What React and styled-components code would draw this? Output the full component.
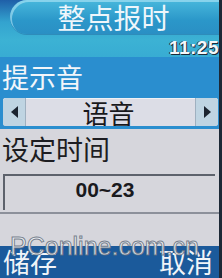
import React from "react";
import styled, { createGlobalStyle } from "styled-components";

const Global = createGlobalStyle`
  html, body { margin: 0; padding: 0; background: #d6d6dc; }
  body { width: 222px; height: 278px; overflow: hidden; }
`;

const cjk = `"Noto Sans CJK SC", "Noto Sans", sans-serif`;

const Screen = styled.div`
  position: relative;
  width: 222px;
  height: 278px;
  display: flex;
  flex-direction: column;
  overflow: hidden;
  background: #d6d6dc;
  font-family: ${cjk};
  border-right: 3px solid #1c2836;
  box-sizing: border-box;
`;

const Top = styled.div`
  background: linear-gradient(to bottom, #1f5fa8 0px, #33a3cf 22px, #3cb2d4 40px, #38acd3 57px);
  display: flex;
  flex-direction: column;
  height: 57px;
`;

const Pill = styled.div`
  margin-left: 10px;
  height: 34px;
  border-radius: 17px 0 0 17px;
  background: linear-gradient(to bottom, #48b8dc, #2b97c9 60%, #2a8fc4);
  box-shadow: inset 2px 2px 0 rgba(190, 235, 250, 0.55), 0 1px 0 rgba(30, 90, 150, 0.4);
  display: flex;
  align-items: center;
  justify-content: center;
  padding-right: 2px;
`;

const Title = styled.span`
  color: #eef6fb;
  font-size: 28px;
  line-height: 34px;
`;

const TimeRow = styled.div`
  display: flex;
  justify-content: flex-end;
  padding-top: 5px;
`;

const Time = styled.span`
  font-family: "Liberation Sans", Arial, sans-serif;
  font-weight: bold;
  font-size: 19px;
  line-height: 17px;
  color: #f4f8fa;
  text-shadow: 1px 1px 0 #1a2a3a, -1px 0 0 #2a3a4a;
  letter-spacing: 0.5px;
`;

const Highlight = styled.div`
  background: #2a8ecf;
  display: flex;
  flex-direction: column;
  padding: 3px 1px 3px 3px;
  height: 72px;
  box-sizing: border-box;
`;

const Label = styled.div`
  font-size: 27px;
  line-height: 33px;
  color: ${(p) => (p.$light ? "#f2f6fa" : "#1d1d22")};
  margin-left: -1px;
`;

const Selector = styled.div`
  margin-top: 5px;
  height: 29px;
  display: flex;
  border-radius: 3px;
  overflow: hidden;
  background: #dcdde6;
  box-shadow: inset 0 1px 0 #eef0f4;
`;

const ArrowCell = styled.div`
  width: 22px;
  background: #bfd4e2;
  display: flex;
  align-items: center;
  justify-content: center;
  border-${(p) => (p.$side === "left" ? "right" : "left")}: 1px solid #9fb0c0;
`;

const Arrow = styled.div`
  width: 0;
  height: 0;
  border-top: 6px solid transparent;
  border-bottom: 6px solid transparent;
  ${(p) =>
    p.$side === "left"
      ? "border-right: 7px solid #1c2430;"
      : "border-left: 7px solid #1c2430;"}
`;

const SelectorValue = styled.div`
  flex: 1;
  display: flex;
  align-items: center;
  justify-content: center;
  font-size: 26px;
  line-height: 29px;
  color: #18181c;
  padding-right: 4px;
`;

const Body = styled.div`
  flex: 1;
  display: flex;
  flex-direction: column;
  padding: 3px 0 0 3px;
`;

const InputBox = styled.div`
  margin-top: 9px;
  margin-right: 4px;
  height: 28px;
  border-top: 2px solid #5d626c;
  border-left: 2px solid #5d626c;
  display: flex;
  align-items: center;
  justify-content: center;
  font-family: "Liberation Sans", Arial, sans-serif;
  font-weight: bold;
  font-size: 21px;
  color: #1a1a1e;
  padding-right: 10px;
  padding-bottom: 6px;
`;

const Divider = styled.div`
  height: 2px;
  background: #8c909a;
  margin: 2px 0 0 -3px;
`;

const SoftKeys = styled.div`
  height: 31px;
  background: #1b5a9b;
  display: flex;
  justify-content: space-between;
  align-items: flex-end;
  padding: 0 6px 1px 3px;
`;

const SoftKey = styled.span`
  color: #f0f4f8;
  font-size: 27px;
  line-height: 31px;
`;

const Watermark = styled.div`
  position: absolute;
  left: 10px;
  top: 232px;
  font-family: "Liberation Sans", Arial, sans-serif;
  font-size: 25px;
  color: rgba(240, 242, 246, 0.9);
  -webkit-text-stroke: 1px rgba(100, 110, 125, 0.85);
  pointer-events: none;
`;

export default function App() {
  return (
    <>
      <Global />
      <Screen>
        <Top>
          <Pill>
            <Title>整点报时</Title>
          </Pill>
          <TimeRow>
            <Time>11:25</Time>
          </TimeRow>
        </Top>
        <Highlight>
          <Label $light>提示音</Label>
          <Selector>
            <ArrowCell $side="left">
              <Arrow $side="left" />
            </ArrowCell>
            <SelectorValue>语音</SelectorValue>
            <ArrowCell $side="right">
              <Arrow $side="right" />
            </ArrowCell>
          </Selector>
        </Highlight>
        <Body>
          <Label>设定时间</Label>
          <InputBox>00~23</InputBox>
          <Divider />
        </Body>
        <SoftKeys>
          <SoftKey>储存</SoftKey>
          <SoftKey>取消</SoftKey>
        </SoftKeys>
        <Watermark>PConline.com.cn</Watermark>
      </Screen>
    </>
  );
}
